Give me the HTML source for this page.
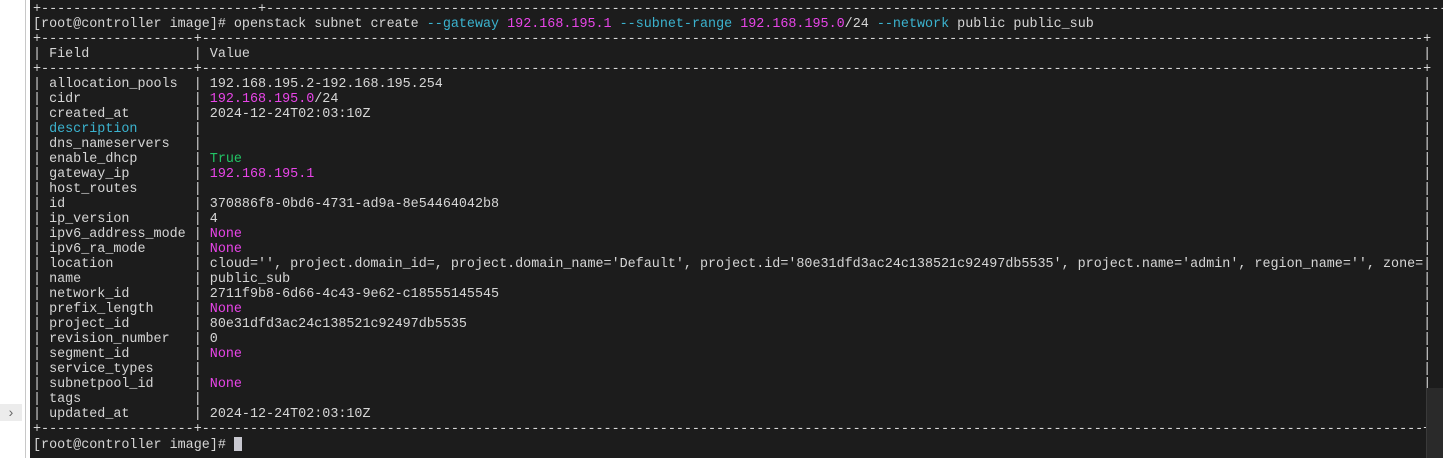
<!DOCTYPE html>
<html><head><meta charset="utf-8"><style>
html,body{margin:0;padding:0;width:1443px;height:458px;overflow:hidden;background:#fff;}
.line{position:absolute;left:25px;top:0;width:1px;height:458px;background:#c8c8c8;}
.term{position:absolute;left:30px;top:0;width:1413px;height:458px;background:#1c1c1c;overflow:hidden;}
pre{position:absolute;left:3px;top:2px;margin:0;font-family:"Liberation Mono",monospace;font-size:13.4px;line-height:15px;color:#d6d6d6;white-space:pre;}
.m{color:#e845e8}.c{color:#3bb3cf}.g{color:#22c465}
.cur{display:inline-block;width:8px;height:14px;background:#c8c8d0;vertical-align:-3px;}
.side{position:absolute;left:0;top:404px;width:22px;height:17px;background:#ececec;color:#666;font:14px "Liberation Sans",sans-serif;text-align:center;line-height:17px;}
.panel{position:absolute;left:1426px;top:388px;width:17px;height:70px;background:#2a2a2a;border-left:1px solid #3a3a3a;}
</style></head><body>
<div class="line"></div>
<div class="side">›</div>
<div class="term">
<pre>+---------------------------+---------------------------------------------------------------------------------------------------------------------------------------------------------------
[root@controller image]# openstack subnet create <span class="c">--gateway</span> <span class="m">192.168.195.1</span> <span class="c">--subnet-range</span> <span class="m">192.168.195.0</span>/24 <span class="c">--network</span> public public_sub
+-------------------+--------------------------------------------------------------------------------------------------------------------------------------------------------+
| Field             | Value                                                                                                                                                  |
+-------------------+--------------------------------------------------------------------------------------------------------------------------------------------------------+
| allocation_pools  | 192.168.195.2-192.168.195.254                                                                                                                          |
| cidr              | <span class="m">192.168.195.0</span>/24                                                                                                                                       |
| created_at        | 2024-12-24T02:03:10Z                                                                                                                                   |
| <span class="c">description</span>       |                                                                                                                                                        |
| dns_nameservers   |                                                                                                                                                        |
| enable_dhcp       | <span class="g">True</span>                                                                                                                                                   |
| gateway_ip        | <span class="m">192.168.195.1</span>                                                                                                                                          |
| host_routes       |                                                                                                                                                        |
| id                | 370886f8-0bd6-4731-ad9a-8e54464042b8                                                                                                                   |
| ip_version        | 4                                                                                                                                                      |
| ipv6_address_mode | <span class="m">None</span>                                                                                                                                                   |
| ipv6_ra_mode      | <span class="m">None</span>                                                                                                                                                   |
| location          | cloud='', project.domain_id=, project.domain_name='Default', project.id='80e31dfd3ac24c138521c92497db5535', project.name='admin', region_name='', zone=|
| name              | public_sub                                                                                                                                             |
| network_id        | 2711f9b8-6d66-4c43-9e62-c18555145545                                                                                                                   |
| prefix_length     | <span class="m">None</span>                                                                                                                                                   |
| project_id        | 80e31dfd3ac24c138521c92497db5535                                                                                                                       |
| revision_number   | 0                                                                                                                                                      |
| segment_id        | <span class="m">None</span>                                                                                                                                                   |
| service_types     |                                                                                                                                                        |
| subnetpool_id     | <span class="m">None</span>                                                                                                                                                   |
| tags              |                                                                                                                                                        |
| updated_at        | 2024-12-24T02:03:10Z                                                                                                                                   |
+-------------------+--------------------------------------------------------------------------------------------------------------------------------------------------------+
[root@controller image]# <span class="cur"></span></pre>
</div>
<div class="panel"></div>
</body></html>
